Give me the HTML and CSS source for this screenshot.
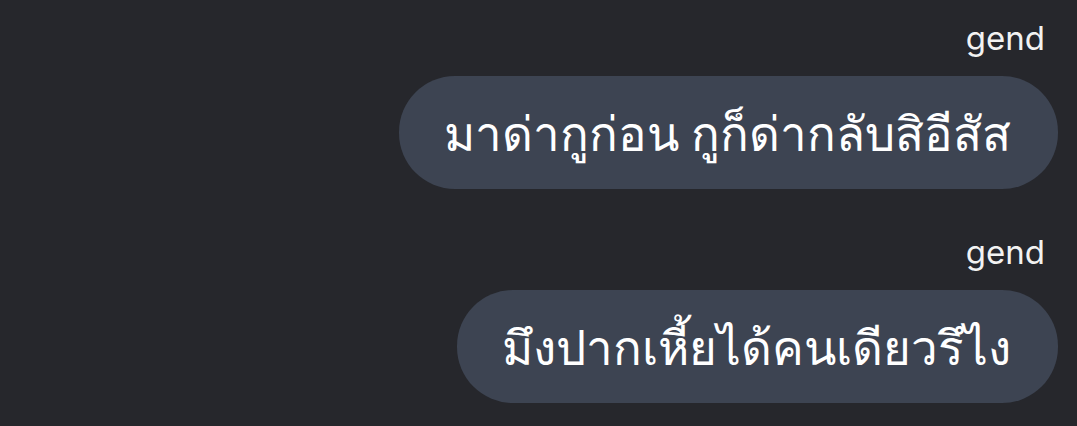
FILE: index.html
```html
<!DOCTYPE html>
<html lang="th">
<head>
<meta charset="utf-8">
<link rel="stylesheet" href="styles.css">
</head>
<body>
<div class="chat">
  <div class="msg">
    <div class="name">gend</div>
    <div class="bubble">มาด่ากูก่อน กูก็ด่ากลับสิอีสัส</div>
  </div>
  <div class="msg">
    <div class="name">gend</div>
    <div class="bubble">มึงปากเหี้ยได้คนเดียวรึไง</div>
  </div>
</div>
</body>
</html>
```
FILE: styles.css
```css
html, body {
  margin: 0;
  padding: 0;
  background: #26272c;
  height: 100%;
}
.chat {
  display: flex;
  flex-direction: column;
  align-items: flex-end;
  padding: 18px 19px 0 0;
  gap: 43px;
  font-family: "Noto Sans", "DejaVu Sans", sans-serif;
}
.msg {
  display: flex;
  flex-direction: column;
  align-items: flex-end;
}
.name {
  font-family: Inter, "Noto Sans", sans-serif;
  color: #f2f2f2;
  font-size: 33px;
  line-height: 40px;
  margin-right: 13px;
  margin-bottom: 18px;
}
.bubble {
  background: #3d4452;
  color: #ffffff;
  font-size: 47.5px;
  height: 113px;
  line-height: 113px;
  padding: 0 47px 0 45px;
  border-radius: 56px;
  box-sizing: border-box;
}
```
